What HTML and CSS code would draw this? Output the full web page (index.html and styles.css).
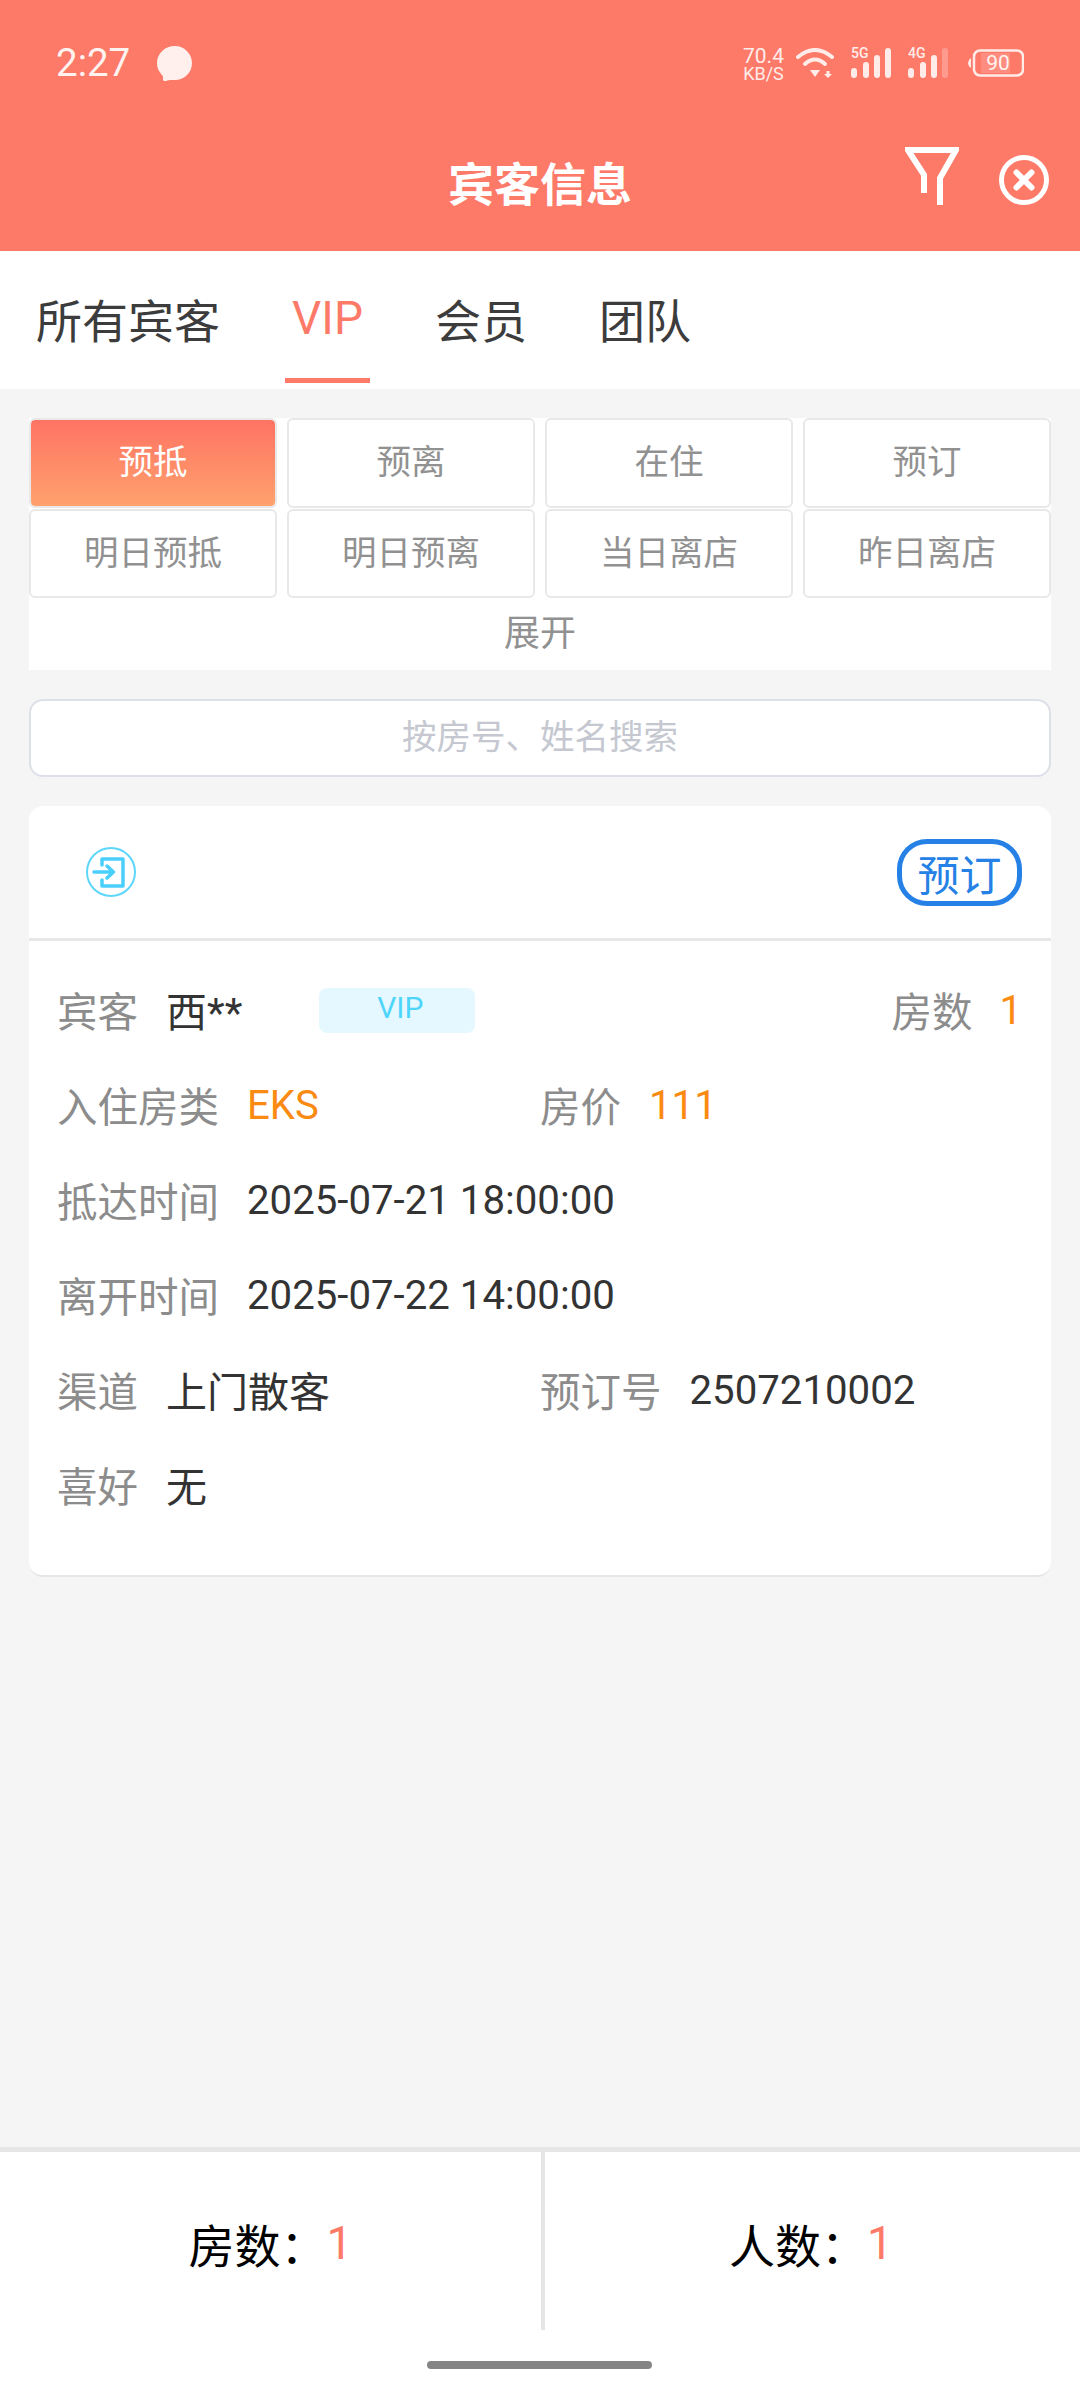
FILE: index.html
```html
<!DOCTYPE html>
<html lang="zh-CN">
<head>
<meta charset="utf-8">
<title>宾客信息</title>
<link rel="stylesheet" href="styles.css">
</head>
<body>
<div class="app">
  <header class="header">
    <div class="status">
      <div class="status-left">
        <span class="time">2:27</span>
        <svg class="bubble" viewBox="0 0 35 35"><path d="M18 0C27 0 35 7.500 35 17C35 27 27 34 18 34C15 34 12 33.500 9 35C7 35.500 5.500 34.500 6 32C6.300 30.500 5.500 29.500 4.500 28.500C1.500 25 0 21.500 0 17C0 7.500 8 0 18 0Z"/></svg>
      </div>
      <div class="status-right">
        <div class="speed"><span class="speed-num">70.4</span><span class="speed-unit">KB/S</span></div>
        <svg class="wifi" viewBox="0 0 38 30">
          <path class="wifi-arc" d="M2 9Q19 -5 36 9"/>
          <path class="wifi-arc" d="M9 16Q19 7 29 16"/>
          <path class="wifi-fill" d="M14 22H24L19 29Z"/>
          <path class="wifi-fill" d="M30.500 23H33.500V26H36L32 30L28 26H30.500Z"/>
        </svg>
        <svg class="signal" viewBox="0 -6 41 36">
          <text class="signal-label" x="0" y="10">5G</text>
          <rect class="bar" x="0" y="20" width="6" height="10" rx="3"/>
          <rect class="bar" x="12" y="14" width="6" height="16" rx="3"/>
          <rect class="bar" x="23" y="7" width="6" height="23" rx="3"/>
          <rect class="bar" x="34" y="0" width="6" height="30" rx="3"/>
        </svg>
        <svg class="signal" viewBox="0 -6 41 36">
          <text class="signal-label" x="0" y="10">4G</text>
          <rect class="bar" x="0" y="20" width="6" height="10" rx="3"/>
          <rect class="bar" x="12" y="14" width="6" height="16" rx="3"/>
          <rect class="bar" x="23" y="7" width="6" height="23" rx="3"/>
          <rect class="bar bar-dim" x="34" y="0" width="6" height="30" rx="3"/>
        </svg>
        <svg class="battery" viewBox="0 0 56 28">
          <path class="battery-nub" d="M3 9V19Q0 17 0 14Q0 11 3 9Z"/>
          <rect class="battery-fill" x="13" y="4" width="29" height="20"/>
          <rect class="battery-body" x="6" y="1.500" width="49" height="25" rx="6"/>
          <text class="battery-text" x="30" y="21">90</text>
        </svg>
      </div>
    </div>
    <div class="titlebar">
      <div></div>
      <h1 class="title">宾客信息</h1>
      <div class="title-actions">
        <svg class="filter-icon" viewBox="0 0 54 60"><path d="M19 46V28L3 3H51L35 31V58"/></svg>
        <svg class="close-icon" viewBox="0 0 50 50">
          <circle class="close-ring" cx="25" cy="25" r="22.500"/>
          <path class="close-x" d="M17.500 17.500L32.500 32.500M32.500 17.500L17.500 32.500"/>
        </svg>
      </div>
    </div>
  </header>

  <nav class="tabs">
    <div class="tab">所有宾客</div>
    <div class="tab tab-active">VIP</div>
    <div class="tab">会员</div>
    <div class="tab tab-last">团队</div>
  </nav>

  <main class="content">
    <section class="filters">
      <div class="filter-grid">
        <div class="filter-btn filter-btn-active">预抵</div>
        <div class="filter-btn">预离</div>
        <div class="filter-btn">在住</div>
        <div class="filter-btn">预订</div>
        <div class="filter-btn">明日预抵</div>
        <div class="filter-btn">明日预离</div>
        <div class="filter-btn">当日离店</div>
        <div class="filter-btn">昨日离店</div>
      </div>
      <div class="expand">展开</div>
    </section>

    <div class="search">按房号、姓名搜索</div>

    <article class="card">
      <div class="card-head">
        <svg class="checkin-icon" viewBox="0 0 50 50">
          <circle class="checkin-ring" cx="25" cy="25" r="24"/>
          <path class="checkin-line" d="M16 18V12H37V39H16V33"/>
          <path class="checkin-line" d="M8 25H27M21 19L27.500 25L21 31"/>
        </svg>
        <span class="order-tag">预订</span>
      </div>
      <div class="card-body">
        <div class="row">
          <span class="label">宾客</span><span class="value">西**</span>
          <span class="vip-tag">VIP</span>
          <span class="label rooms-label">房数</span><span class="value num accent">1</span>
        </div>
        <div class="row row-split">
          <div class="field"><span class="label">入住房类</span><span class="value num accent">EKS</span></div>
          <div class="field"><span class="label">房价</span><span class="value num accent">111</span></div>
        </div>
        <div class="row">
          <span class="label">抵达时间</span><span class="value num">2025-07-21 18:00:00</span>
        </div>
        <div class="row">
          <span class="label">离开时间</span><span class="value num">2025-07-22 14:00:00</span>
        </div>
        <div class="row row-split">
          <div class="field"><span class="label">渠道</span><span class="value">上门散客</span></div>
          <div class="field"><span class="label">预订号</span><span class="value num">2507210002</span></div>
        </div>
        <div class="row">
          <span class="label">喜好</span><span class="value">无</span>
        </div>
      </div>
    </article>
  </main>

  <footer class="footer">
    <div class="stats">
      <div class="stat stat-first">房数：<span class="stat-num">1</span></div>
      <div class="stat stat-second">人数：<span class="stat-num">1</span></div>
    </div>
    <div class="home-zone"><div class="home-bar"></div></div>
  </footer>
</div>
</body>
</html>
```

FILE: styles.css
```css
* { box-sizing: border-box; }
html, body { margin: 0; padding: 0; }
body {
  width: 1080px;
  height: 2400px;
  font-family: Roboto, "Noto Sans CJK SC", sans-serif;
  background: #f5f5f5;
  overflow: hidden;
}
.app { display: flex; flex-direction: column; height: 2400px; }

/* header */
.header { background: #fd7a69; height: 251px; color: #fff; flex: none; }
.status {
  height: 126px;
  padding: 0 56px 0 56px;
  display: flex;
  align-items: center;
  justify-content: space-between;
}
.status-left { display: flex; align-items: center; gap: 27px; }
.time { font-size: 38.500px; font-weight: 400; color: #fff3f0; line-height: 1; }
.bubble { width: 35px; height: 35px; fill: #fff0ed; }
.status-right { display: flex; align-items: center; }
.speed { display: flex; flex-direction: column; align-items: center; width: 41px; color: #ffece9; margin-right: 12px; }
.speed-num { font-size: 21px; line-height: 20px; }
.speed-unit { font-size: 18px; line-height: 15px; }
.wifi { width: 38px; height: 30px; margin-right: 17px; }
.wifi-arc { fill: none; stroke: #ffece9; stroke-width: 4; stroke-linecap: round; }
.wifi-fill { fill: #ffece9; }
.signal { width: 41px; height: 36px; margin-top: -6px; margin-right: 16px; }
.signal-label { font-family: Roboto, sans-serif; font-size: 14px; font-weight: 500; fill: #ffece9; }
.bar { fill: #ffece9; }
.bar-dim { fill: #fe9a8e; }
.battery { width: 56px; height: 28px; margin-left: 3px; }
.battery-nub { fill: #ffece9; }
.battery-fill { fill: #fe8d80; }
.battery-body { fill: none; stroke: #ffece9; stroke-width: 2.500; }
.battery-text { font-family: Roboto, sans-serif; font-size: 21px; fill: #fff3f0; text-anchor: middle; }

.titlebar {
  height: 125px;
  display: grid;
  grid-template-columns: 1fr auto 1fr;
  padding: 0 31px 6px 31px;
  align-items: center;
}
.title { margin: 0; font-size: 46px; font-weight: 700; line-height: 1.2; color: #fff; }
.title-actions { display: flex; justify-content: flex-end; gap: 40px; align-self: start; }
.filter-icon { width: 54px; height: 60px; margin-top: 21px; }
.filter-icon path { fill: none; stroke: #fff; stroke-width: 6; stroke-linejoin: miter; }
.close-icon { width: 50px; height: 50px; margin-top: 29px; }
.close-ring { fill: none; stroke: #fff; stroke-width: 5; }
.close-x { fill: none; stroke: #fff; stroke-width: 6; stroke-linecap: round; }

/* tabs */
.tabs {
  flex: none;
  height: 138px;
  background: #fff;
  display: flex;
  gap: 65px;
  padding-left: 36px;
}
.tab {
  height: 132px;
  padding-top: 7px;
  border-bottom: 5px solid transparent;
  font-size: 46px;
  color: #3c3c3c;
  display: flex;
  align-items: center;
  justify-content: center;
}
.tab-active { color: #fd7a69; width: 85px; border-bottom-color: #fd7a69; }
.tab-last { margin-left: 7px; }

/* content */
.content { flex: 1; padding: 29px 29px 0; background: #f5f5f5; }
.filters { background: #fff; }
.filter-grid {
  display: grid;
  grid-template-columns: repeat(4, 1fr);
  grid-template-rows: 90px 89px;
  column-gap: 10px;
  row-gap: 1px;
}
.filter-btn {
  border: 2px solid #e8e8e8;
  border-radius: 6px;
  background: #fff;
  color: #919191;
  font-size: 34.500px;
  display: flex;
  align-items: center;
  justify-content: center;
  padding-bottom: 8px;
}
.filter-btn-active {
  background: linear-gradient(180deg, #fe7363 0%, #ffa26e 100%);
  background-clip: padding-box;
  color: #fff;
}
.expand {
  height: 72px;
  display: flex;
  align-items: center;
  justify-content: center;
  color: #919191;
  font-size: 36px;
  padding-bottom: 9px;
}
.search {
  margin-top: 29px;
  height: 78px;
  border: 2px solid #dde0e8;
  border-radius: 14px;
  background: #fff;
  color: #c5c8d0;
  font-size: 34.500px;
  display: flex;
  align-items: center;
  justify-content: center;
  padding-bottom: 9px;
}

/* card */
.card {
  margin-top: 29px;
  background: #fff;
  border-radius: 14px;
  border-bottom: 2px solid #e6e6e6;
}
.card-head {
  height: 135px;
  border-bottom: 3px solid #e8e8e8;
  display: flex;
  align-items: center;
  justify-content: space-between;
  padding: 0 29px 0 57px;
}
.checkin-icon { width: 50px; height: 50px; }
.checkin-ring { fill: none; stroke: #5dd6fb; stroke-width: 2; }
.checkin-line { fill: none; stroke: #49cffb; stroke-width: 3.500; stroke-linecap: round; stroke-linejoin: round; }
.order-tag {
  width: 125px;
  height: 67px;
  border: 5px solid #2681e6;
  border-radius: 30px;
  color: #2681e6;
  font-size: 42px;
  display: flex;
  align-items: center;
  justify-content: center;
}
.card-body { padding: 25px 29px 39px 28px; }
.row { height: 95px; display: flex; align-items: flex-start; line-height: 95px; }
.row-split { display: grid; grid-template-columns: 483px 1fr; }
.field { display: flex; align-items: flex-start; }
.label { font-size: 40.500px; color: #8c8c8c; margin-right: 28px; white-space: nowrap; }
.value { font-size: 41px; color: #333; white-space: nowrap; }
.num { font-size: 40.200px; line-height: 89px; }
.accent { color: #fa8a12; }
.vip-tag {
  margin-left: 77px;
  margin-top: 22px;
  width: 156px;
  height: 45px;
  line-height: 40px;
  padding-left: 6px;
  background: #e6f8ff;
  border-radius: 8px;
  color: #4fd5fb;
  font-size: 30px;
  text-align: center;
}
.rooms-label { margin-left: auto; margin-right: 27px; }

/* footer */
.footer { flex: none; height: 253px; background: #fff; border-top: 5px solid #e6e6e6; }
.stats { height: 178px; display: flex; }
.stat {
  flex: 1;
  display: flex;
  align-items: center;
  justify-content: center;
  font-size: 46px;
  color: #000;
  padding-top: 4px;
}
.stat-first { flex: none; width: 545px; border-right: 4px solid #e6e6e6; }
.stat-second { padding-right: 3px; }
.stat-num { color: #fd7a69; }
.home-zone { height: 70px; padding: 31px 1px 0 0; display: flex; justify-content: center; }
.home-bar { width: 225px; height: 8px; border-radius: 4px; background: #858585; }
```
